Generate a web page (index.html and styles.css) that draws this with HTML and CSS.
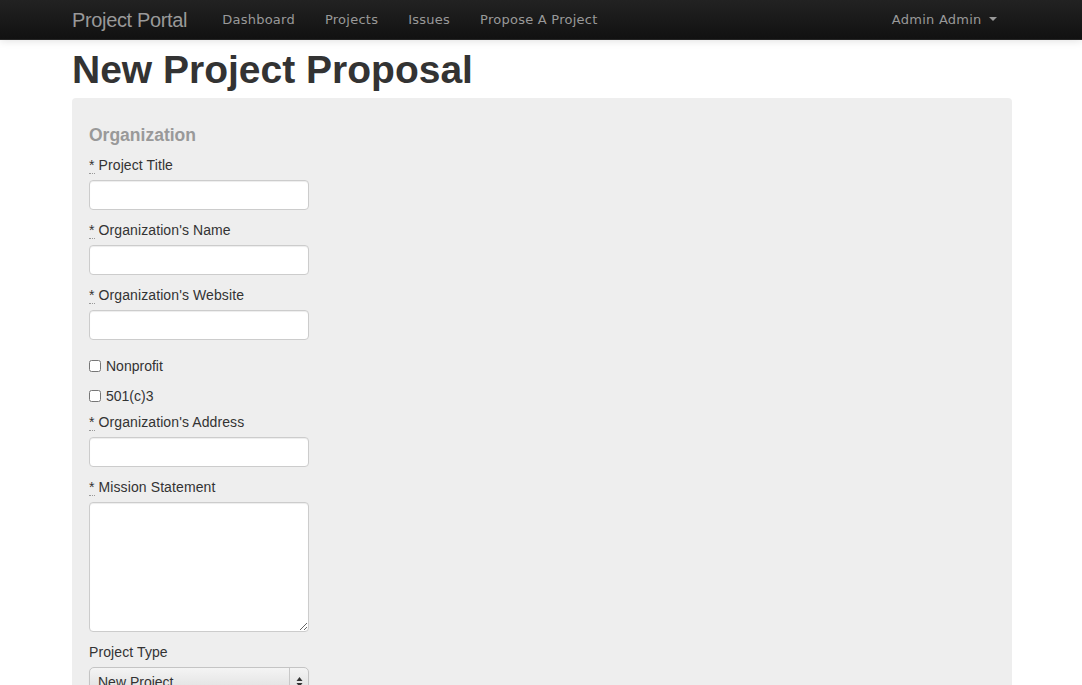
FILE: index.html
```html
<!DOCTYPE html>
<html>
<head>
<meta charset="utf-8">
<title>New Project Proposal</title>
<link rel="stylesheet" href="styles.css">
</head>
<body>
<div class="navbar">
  <div class="container nav-inner">
    <a class="brand" href="#">Project Portal</a>
    <ul class="nav">
      <li><a href="#">Dashboard</a></li>
      <li><a href="#">Projects</a></li>
      <li><a href="#">Issues</a></li>
      <li><a href="#">Propose A Project</a></li>
    </ul>
    <ul class="nav nav-right">
      <li><a href="#">Admin Admin <span class="caret"></span></a></li>
    </ul>
  </div>
</div>
<div class="container">
  <h1 class="title">New Project Proposal</h1>
  <form class="well">
    <div class="legend">Organization</div>
    <label class="lbl"><abbr title="required">*</abbr> Project Title</label>
    <input class="field" type="text">
    <label class="lbl"><abbr title="required">*</abbr> Organization's Name</label>
    <input class="field" type="text">
    <label class="lbl"><abbr title="required">*</abbr> Organization's Website</label>
    <input class="field" type="text">
    <label class="check first"><input type="checkbox"> Nonprofit</label>
    <label class="check second"><input type="checkbox"> 501(c)3</label>
    <label class="lbl"><abbr title="required">*</abbr> Organization's Address</label>
    <input class="field" type="text">
    <label class="lbl"><abbr title="required">*</abbr> Mission Statement</label>
    <textarea class="field area"></textarea>
    <label class="lbl">Project Type</label>
    <div class="select">
      <span class="select-text">New Project</span>
      <span class="select-arrows">
        <svg width="7" height="12" viewBox="0 0 7 12"><path d="M3.5 1 L6.5 5 H0.5 Z M3.5 11 L6.5 7 H0.5 Z" fill="#333"/></svg>
      </span>
    </div>
  </form>
</div>
</body>
</html>
```

FILE: styles.css
```css
* { box-sizing: border-box; }
html, body { margin: 0; padding: 0; }
body {
  font-family: "Liberation Sans", Arial, sans-serif;
  font-size: 14px;
  line-height: 20px;
  color: #333;
  background: #fff;
}
.container {
  width: 940px;
  margin-left: calc(50% - 469px);
}
.navbar {
  height: 40px;
  background: linear-gradient(#222222, #111111);
  border-bottom: 1px solid #252525;
  box-shadow: 0 1px 8px rgba(0,0,0,0.12);
}
.nav-inner {
  display: flex;
  align-items: center;
  height: 39px;
}
.brand {
  font-family: "Liberation Sans", Arial, sans-serif;
  font-size: 20px;
  letter-spacing: -0.35px;
  color: #999;
  text-decoration: none;
  padding: 0 20px 0 0;
  line-height: 36px;
}
.nav {
  list-style: none;
  margin: 0;
  padding: 0;
  display: flex;
}
.nav a {
  display: block;
  padding: 0 15px;
  font-family: "DejaVu Sans", Verdana, sans-serif;
  font-size: 13px;
  letter-spacing: 0.25px;
  line-height: 36px;
  color: #999;
  text-decoration: none;
}
.nav-right { margin-left: auto; }
.nav-right a { padding-right: 15px; }
.caret {
  display: inline-block;
  width: 0; height: 0;
  border-top: 4px solid #999;
  border-left: 4px solid transparent;
  border-right: 4px solid transparent;
  vertical-align: middle;
  margin-left: 3px;
  margin-top: -2px;
}
.title {
  font-size: 39px;
  font-weight: bold;
  line-height: 40px;
  margin: 10px 0 8px;
  color: #333;
}
.well {
  background: #eeeeee;
  border-radius: 4px;
  padding: 17px 17px 40px;
  margin: 0;
  min-height: 700px;
}
.legend {
  font-size: 17.5px;
  font-weight: bold;
  color: #999;
  line-height: 40px;
}
.lbl {
  display: block;
  line-height: 20px;
  margin-bottom: 5px;
  letter-spacing: 0.1px;
}
abbr {
  text-decoration: none;
  border-bottom: 1px dotted #999;
}
.field {
  display: block;
  width: 220px;
  height: 30px;
  margin: 0 0 10px;
  padding: 4px 6px;
  border: 1px solid #ccc;
  border-radius: 4px;
  background: #fff;
  font-family: inherit;
  font-size: 14px;
  box-shadow: inset 0 1px 1px rgba(0,0,0,0.075);
}
.area {
  height: 130px;
  resize: both;
}
.check {
  display: flex;
  align-items: center;
  height: 20px;
  line-height: 20px;
}
.check input {
  width: 12px;
  height: 12px;
  margin: 0 5px 0 0;
}
.check.first { margin-top: 16px; margin-bottom: 10px; }
.check.second { margin-bottom: 6px; }
.select {
  width: 220px;
  height: 30px;
  border: 1px solid #c4c4c4;
  border-radius: 5px;
  background: linear-gradient(#f4f4f4, #dcdcdc);
  display: flex;
  align-items: center;
  box-shadow: 0 1px 1px rgba(0,0,0,0.1);
}
.select-text {
  flex: 1;
  padding-left: 8px;
  font-size: 14px;
  color: #333;
}
.select-arrows {
  width: 19px;
  height: 100%;
  border-left: 1px solid #c8c8c8;
  display: flex;
  align-items: center;
  justify-content: center;
}
```
